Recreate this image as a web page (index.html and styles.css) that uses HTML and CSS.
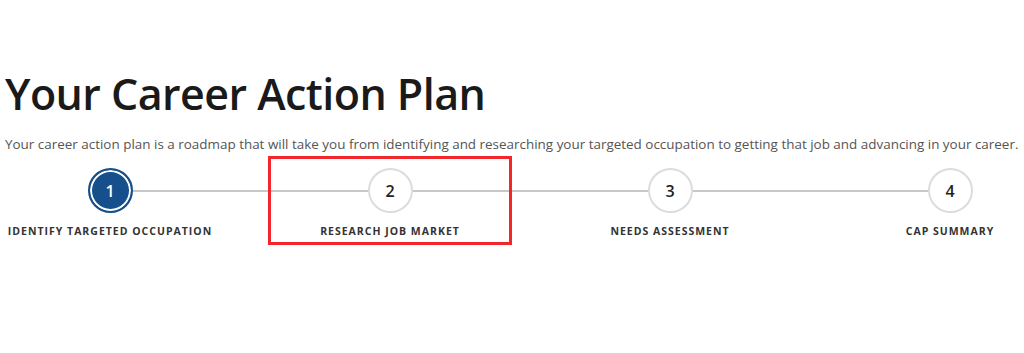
FILE: index.html
```html
<!DOCTYPE html>
<html lang="en">
<head>
  <meta charset="UTF-8" />
  <meta name="viewport" content="width=device-width, initial-scale=1" />
  <title>Your Career Action Plan</title>
  <link rel="stylesheet" href="styles.css">
</head>
<body>
  <div class="page">
    <h1>Your Career Action Plan</h1>
    <p class="intro">Your career action plan is a roadmap that will take you from identifying and researching your targeted occupation to getting that job and advancing in your career.</p>

    <!-- STEPS -->
    <div class="steps">
      <div class="step active">
        <div class="circle">1</div>
        <div class="label">Identify Targeted Occupation</div>
      </div>
      <div class="step highlight">
        <div class="circle">2</div>
        <div class="label">Research Job Market</div>
      </div>
      <div class="step">
        <div class="circle">3</div>
        <div class="label">Needs Assessment</div>
      </div>
      <div class="step">
        <div class="circle">4</div>
        <div class="label">CAP Summary</div>
      </div>
    </div>
  </div>
</body>
</html>
```

FILE: styles.css
```css
body {
  margin: 0;
  min-height: 100vh;
  font-family: 'Open Sans', 'Noto Sans', sans-serif;
  background: #fff;
  color: #1a1a1a;
}

.page {
  padding: 64px 5px 60px 5px;
}

h1 {
  margin: 0;
  font-size: 43px;
  font-weight: 600;
  letter-spacing: -0.55px;
  line-height: 60px;
  color: #1a1a1a;
}

.intro {
  margin: 10px 0 0 0;
  font-size: 13.45px;
  line-height: 20px;
  color: #555;
  white-space: nowrap;
}

.steps {
  position: relative;
  display: grid;
  grid-template-columns: repeat(4, 140px);
  column-gap: 140px;
  margin: 14px 0 0 35px;
}

.steps::before {
  content: "";
  position: absolute;
  left: 70px;
  right: 70px;
  top: 22px;
  height: 2px;
  background: #c8c8c8;
}

.step {
  position: relative;
  display: flex;
  flex-direction: column;
  align-items: center;
  padding-bottom: 7px;
}

.circle {
  position: relative;
  z-index: 1;
  width: 41px;
  height: 41px;
  border: 2px solid #dcdcdc;
  border-radius: 50%;
  background: #fff;
  display: flex;
  align-items: center;
  justify-content: center;
  font-size: 16px;
  font-weight: 600;
  color: #222;
}

.step.active .circle {
  border-color: #15508c;
  background: #15508c;
  box-shadow: inset 0 0 0 2px #fff;
  color: #fff;
}

.label {
  margin-top: 11px;
  font-size: 10.5px;
  font-weight: 700;
  letter-spacing: 1px;
  text-transform: uppercase;
  white-space: nowrap;
  color: #333;
}

.step.highlight::after {
  content: "";
  position: absolute;
  left: -52px;
  right: -52px;
  top: -12px;
  bottom: 0;
  border: 3px solid #f3262b;
}
```
